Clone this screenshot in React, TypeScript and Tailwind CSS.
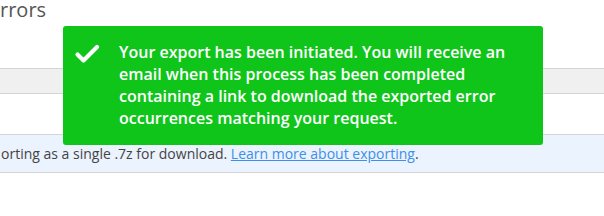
import React from "react";

export default function App() {
  return (
    <div className="relative w-[604px] h-[216px] overflow-hidden bg-white" style={{ fontFamily: '"Open Sans", sans-serif' }}>
      <div className="h-[68px] flex items-start">
        <h1 className="text-[20px] leading-[20px] text-[#555] pl-[0px] font-normal">rrors</h1>
      </div>
      <div className="h-[26px] bg-[#f0f0f0] border-y border-[#d4d4d4]" />
      <div className="h-[40px]" />
      <div className="h-[39px] bg-[#ebf3fe] border-y border-[#d4d4d4] flex items-center text-[14px] text-[#444] pl-[1px]">
        <span>
          orting as a single .7z for download.{" "}
          <a href="#" className="text-[#3d8fe8] underline">Learn more about exporting</a>.
        </span>
      </div>
      <div className="absolute left-[63px] top-[26px] w-[480px] h-[119px] bg-[#0fc51a] rounded-[3px] flex pt-[15px] pl-[11px]">
        <svg width="26" height="22" viewBox="0 0 26 22" className="mt-[2px] shrink-0">
          <path d="M3.5 11.5 L9.5 17.5 L23 4" fill="none" stroke="white" strokeWidth="4.2" strokeLinecap="round" strokeLinejoin="round" />
        </svg>
        <p className="ml-[19px] w-[405px] text-white font-semibold text-[16px] leading-[22px]">
          Your export has been initiated. You will receive an email when this process has been completed containing a link to download the exported error occurrences matching your request.
        </p>
      </div>
    </div>
  );
}
